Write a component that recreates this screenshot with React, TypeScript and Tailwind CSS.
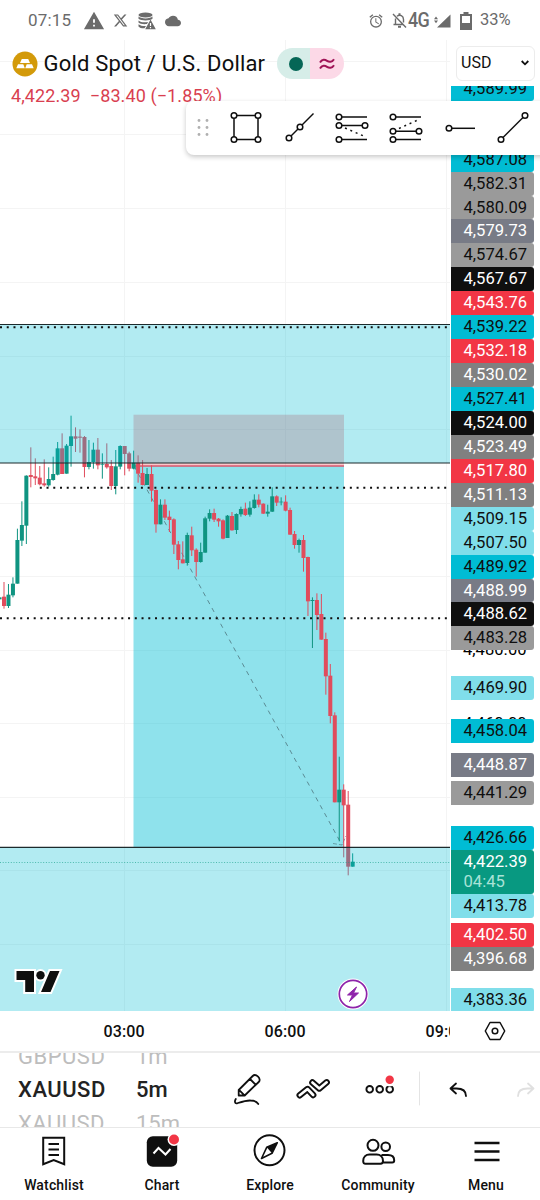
import { FaXTwitter } from "react-icons/fa6";
import { MdWarning, MdCloud, MdOutlineAlarm } from "react-icons/md";

type Candle = [string, number, number, number, number];

// colour, high, body top, body bottom, low (thirds of a pixel below y = 400)
const candles: Candle[] = [
  ["g", 592, 592, 598, 598],
  ["r", 546, 590, 618, 626],
  ["g", 552, 584, 618, 624],
  ["g", 532, 551, 586, 592],
  ["g", 386, 420, 551, 551],
  ["g", 304, 375, 422, 438],
  ["g", 226, 227, 377, 432],
  ["r", 142, 225, 231, 262],
  ["r", 175, 229, 235, 255],
  ["r", 198, 233, 253, 256],
  ["r", 178, 250, 256, 260],
  ["g", 202, 237, 256, 260],
  ["g", 170, 222, 240, 242],
  ["g", 126, 145, 224, 226],
  ["r", 100, 145, 222, 222],
  ["g", 132, 137, 221, 221],
  ["g", 47, 109, 138, 200],
  ["r", 82, 109, 116, 156],
  ["r", 88, 110, 113, 158],
  ["r", 108, 111, 201, 232],
  ["g", 120, 186, 201, 208],
  ["g", 128, 149, 186, 206],
  ["r", 114, 149, 196, 208],
  ["g", 160, 192, 194, 236],
  ["r", 130, 192, 202, 206],
  ["r", 180, 198, 258, 270],
  ["g", 150, 199, 258, 283],
  ["g", 136, 138, 200, 208],
  ["r", 138, 138, 162, 226],
  ["r", 155, 160, 206, 214],
  ["g", 152, 188, 206, 208],
  ["r", 166, 188, 221, 248],
  ["r", 180, 219, 255, 256],
  ["g", 204, 222, 255, 255],
  ["r", 196, 222, 272, 305],
  ["r", 268, 270, 373, 398],
  ["g", 298, 314, 373, 373],
  ["r", 298, 314, 353, 360],
  ["r", 332, 350, 360, 396],
  ["r", 355, 358, 434, 462],
  ["r", 423, 433, 480, 508],
  ["r", 424, 478, 490, 490],
  ["g", 398, 405, 489, 497],
  ["r", 380, 406, 451, 468],
  ["r", 445, 449, 486, 530],
  ["g", 428, 456, 486, 488],
  ["g", 350, 355, 458, 458],
  ["g", 328, 339, 356, 364],
  ["r", 326, 339, 359, 366],
  ["r", 354, 356, 364, 380],
  ["r", 358, 361, 416, 418],
  ["g", 345, 347, 414, 414],
  ["r", 336, 348, 391, 392],
  ["g", 340, 342, 390, 402],
  ["g", 320, 327, 343, 350],
  ["r", 308, 326, 345, 348],
  ["g", 304, 323, 344, 350],
  ["g", 283, 299, 324, 326],
  ["r", 283, 299, 314, 322],
  ["r", 310, 311, 341, 342],
  ["g", 314, 335, 341, 350],
  ["g", 262, 289, 335, 336],
  ["r", 286, 289, 308, 318],
  ["g", 292, 305, 307, 316],
  ["r", 286, 305, 332, 334],
  ["r", 323, 330, 404, 404],
  ["r", 393, 402, 435, 446],
  ["g", 416, 420, 435, 458],
  ["r", 405, 420, 474, 515],
  ["r", 470, 471, 604, 648],
  ["g", 592, 600, 603, 744],
  ["r", 580, 600, 645, 690],
  ["r", 582, 642, 719, 719],
  ["r", 698, 717, 829, 884],
  ["r", 792, 827, 948, 970],
  ["r", 937, 946, 1207, 1207],
  ["g", 1070, 1169, 1207, 1324],
  ["r", 1153, 1169, 1216, 1372],
  ["r", 1173, 1214, 1400, 1426],
  ["g", 1360, 1385, 1400, 1400],
];

const CYAN = "bg-[#00bcd4] text-[#0f0f0f]";
const LIGHT = "bg-[#80deea] text-[#0f0f0f]";
const GRAY = "bg-[#9a9a9a] text-[#0f0f0f]";
const DARK = "bg-[#808080] text-white";
const SLATE = "bg-[#787b86] text-white";
const BLACK = "bg-[#0f0f0f] text-white";
const RED = "bg-[#f23645] text-white";

// price, colours, gap above
const prices = [
  ["4,589.99", CYAN, "-mt-[9px]"],
  ["4,587.08", CYAN, "mt-[46.700px]"],
  ["4,582.31", GRAY, ""],
  ["4,580.09", GRAY, ""],
  ["4,579.73", SLATE, ""],
  ["4,574.67", GRAY, ""],
  ["4,567.67", BLACK, ""],
  ["4,543.76", RED, ""],
  ["4,539.22", CYAN, ""],
  ["4,532.18", RED, ""],
  ["4,530.02", DARK, ""],
  ["4,527.41", CYAN, ""],
  ["4,524.00", BLACK, ""],
  ["4,523.49", DARK, ""],
  ["4,517.80", RED, ""],
  ["4,511.13", DARK, ""],
  ["4,509.15", LIGHT, ""],
  ["4,507.50", LIGHT, ""],
  ["4,489.92", CYAN, ""],
  ["4,488.99", SLATE, ""],
  ["4,488.62", BLACK, ""],
  ["4,483.28", GRAY, ""],
  ["4,469.90", LIGHT, "mt-[25.500px]"],
  ["4,458.04", CYAN, "mt-[19.500px]"],
  ["4,448.87", SLATE, "mt-[9.500px]"],
  ["4,441.29", GRAY, "mt-[4px]"],
  ["4,426.66", CYAN, "mt-[21.500px]"],
  ["4,422.39", "bg-[#089981] text-white", ""],
  ["4,413.78", LIGHT, ""],
  ["4,402.50", RED, "mt-[5.500px]"],
  ["4,396.68", DARK, ""],
  ["4,383.36", LIGHT, "mt-[17px]"],
];

const StatusBar = () => (
  <div className="h-10 shrink-0 flex items-center justify-between pt-px pl-7 pr-7 text-[#6b6b6b]">
    <div className="flex items-center">
      <span className="text-[17px] w-[43px] tracking-[0.2px]">07:15</span>
      <MdWarning className="ml-[12px] w-[22px] h-[22px]" />
      <FaXTwitter className="ml-[8px] w-[15px] h-[15px]" />
      <svg className="ml-[10px] w-[18px] h-[18px]" viewBox="0 0 18 18" fill="currentColor">
        <ellipse cx="7.500" cy="3" rx="7" ry="2.600" />
        <path d="M.5 4.600c2 2.400 12 2.400 14 0v2.200C12 9 3 9 .5 6.800z" />
        <path d="M.5 8.400c2 2 6 2 9.500 1.500l-1 2.200C5 12.400 2 12 .5 10.600z" />
        <path d="M.5 12.200c2 1.700 5 1.800 7.500 1.700l-1.500 2.400C4 16.400 1.500 16 .5 14.500z" />
        <path d="M12.500 7.500 17.800 17.300H7.200zM11.900 11v3h1.200v-3zm0 4v1.200h1.200V15z" fillRule="evenodd" />
      </svg>
      <MdCloud className="ml-[9px] w-[16px] h-[16px]" />
    </div>
    <div className="flex items-center">
      <MdOutlineAlarm className="w-[16px] h-[16px]" />
      <svg className="ml-[8px] w-[15px] h-[17px]" viewBox="0 0 15 17" fill="none" stroke="currentColor" strokeWidth="1.400">
        <path d="M1 2 14 15.500M5 4.200C8 2 11.500 4 11.500 7.500v3M3.500 6.500v6H1.500h9.500" />
        <path d="M6 14.800h3M7.500 1.300v2" strokeWidth="2" />
      </svg>
      <span className="text-[19.500px] font-medium tracking-[-0.600px] scale-x-[.92]">4G</span>
      <svg className="ml-[4px] w-[17px] h-[14px]" viewBox="0 0 17 14" fill="currentColor">
        <path d="M16.500.5v13H3zM0 5.200l2-2.700 2 2.700zM0 6.600h4L2 9.300z" />
      </svg>
      <svg className="ml-[9px] w-[12px] h-[18px]" viewBox="0 0 12 18">
        <path d="M3.500 0h5v2H12v16H0V2h3.500z" fill="currentColor" />
        <path d="M2 4h8v7H2z" fill="#fff" />
      </svg>
      <span className="ml-[8px] text-[16.500px] w-[32px]">33%</span>
    </div>
  </div>
);

const DottedLine = ({ y, from }: { y: number; from: number }) => (
  <line x1={from} x2="449" y1={y} y2={y} stroke="#0f0f0f" strokeWidth="2" strokeDasharray="2 4.740" />
);

const Chart = () => (
  <svg className="block w-[450px] h-[971px]" viewBox="0 40 450 971">
    <g stroke="#f4f4f4" strokeWidth="1">
      {[61.5, 134.5, 208.5, 282.5, 356.5, 429.5, 503.5, 576.5, 650.5, 723.5, 797.5, 870.5, 944.5].map((y) => (
        <line key={y} x1="0" x2="450" y1={y} y2={y} />
      ))}
      {[124.5, 285.5, 446.5].map((x) => (
        <line key={x} x1={x} x2={x} y1="40" y2="1011" />
      ))}
    </g>
    {/* short position */}
    <rect x="133.500" y="414.700" width="210.500" height="51" fill="#f23645" fillOpacity=".28" />
    <rect x="133.500" y="466" width="210.500" height="381" fill="#00bcd4" fillOpacity=".44" />
    <line x1="134" x2="344" y1="466" y2="466" stroke="#d9536a" strokeWidth="1.300" />
    <path d="M134 466 342 845" stroke="#5b8b94" strokeWidth="1" strokeDasharray="4.500 4.500" fill="none" />
    <path d="M333 843.500l9 1.500 4-9" stroke="#5b8b94" strokeWidth=".8" strokeDasharray="4 2" fill="none" />
    {candles.map(([color, high, top, bottom, low], i) => {
      const x = 4 + (i - 1) * 4.47;
      const fill = color === "g" ? "#0f9481" : "#e04c5d";
      return (
        <g key={i} fill={fill}>
          <rect x={x - 0.5} y={400 + high / 3} width="1" height={(low - high) / 3} />
          <rect x={x - 2} y={400 + top / 3} width="4" height={(bottom - top) / 3} />
        </g>
      );
    })}
    <rect x="0" y="324" width="450" height="139" fill="#00bcd4" fillOpacity=".3" />
    <rect x="0" y="847" width="450" height="164" fill="#00bcd4" fillOpacity=".3" />
    <g stroke="#1d2a2c" strokeWidth="1.200">
      <line x1="0" x2="450" y1="324.500" y2="324.500" />
      <line x1="0" x2="450" y1="463" y2="463" />
      <line x1="0" x2="450" y1="847.300" y2="847.300" />
    </g>
    <DottedLine y={327.300} from={0} />
    <DottedLine y={487.800} from={39.800} />
    <DottedLine y={618.300} from={0} />
    <line x1="0" x2="450" y1="862.500" y2="862.500" stroke="#089981" strokeOpacity=".6" strokeDasharray="1 1.700" />
  </svg>
);

const ChartHeader = () => (
  <div className="absolute top-0 left-0 pl-3 pt-2">
    <div className="flex items-center h-[31px]">
      <svg className="w-[26px] h-[26px]" viewBox="0 0 26 26">
        <circle cx="13" cy="13" r="12.500" fill="#d39a0a" />
        <path d="M9.800 8h6.400l1.800 4H8zM6 13.200h5.300l1.500 4H4.300zM14.700 13.200H20l1.700 4h-8.500z" fill="#fff" />
      </svg>
      <h1 className="ml-[5.500px] w-[233.500px] text-[22px] tracking-[0.190px] leading-none text-[#0f0f0f] whitespace-nowrap">Gold Spot / U.S. Dollar</h1>
      <div className="flex w-[67px] h-[31px] rounded-full overflow-hidden">
        <div className="w-[33px] bg-[#d6ede8] flex items-center justify-center pl-1">
          <div className="w-[14px] h-[14px] rounded-full bg-[#056656]" />
        </div>
        <div className="w-[34px] bg-[#fcd9e7] flex items-center justify-center">
          <svg className="w-4 h-3" viewBox="0 0 16 12" fill="none" stroke="#a01356" strokeWidth="2">
            <path d="M1 4.500C3 1 6 1.500 8 2.800S13 4.500 15 1.200M1 10.500C3 7 6 7.500 8 8.800S13 10.500 15 7.200" />
          </svg>
        </div>
      </div>
    </div>
    <div className="-ml-px mt-[7px] flex gap-[9px] text-[18px] tracking-[0.100px] leading-[20px] text-[#d93f50] whitespace-nowrap">
      <span>4,422.39</span>
      <span>−83.40 (−1.85%)</span>
    </div>
  </div>
);

const Handle = ({ x, y }: { x: number; y: number }) => (
  <circle cx={x} cy={y} r="2.800" fill="#fff" />
);

const DrawingBar = () => (
  <div className="absolute left-[186px] top-[61px] w-[360px] h-[53.500px] rounded-l-lg bg-white shadow-[0_2px_5px_rgba(0,0,0,0.22)] flex items-start">
    <svg className="w-[354px] h-[53px]" viewBox="186 101 354 53" fill="none" stroke="#0f0f0f" strokeWidth="1.500">
      <g fill="#b0b0b0" stroke="none">
        {[120.500, 127.500, 134.500].map((y) => (
          <g key={y}>
            <circle cx="199" cy={y} r="1.400" />
            <circle cx="207" cy={y} r="1.400" />
          </g>
        ))}
      </g>
      <path d="M234 115.500h24v24h-24z" />
      <Handle x={234} y={115.500} />
      <Handle x={258} y={115.500} />
      <Handle x={234} y={139.500} />
      <Handle x={258} y={139.500} />
      <path d="M289 138 313.500 113.500" />
      <Handle x={289} y={138} />
      <Handle x={300} y={127} />
      <path d="M339 117h28M339 125.500h26M339 139.500h28" />
      <path d="M345 128 366 137" strokeDasharray="2 3.800" />
      <Handle x={339} y={117} />
      <Handle x={339} y={125.500} />
      <Handle x={365} y={125.500} />
      <Handle x={339} y={139.500} />
      <path d="M393 117h28M393 131.300h26M393 139.500h28" />
      <path d="M399 128.500 420 119" strokeDasharray="2 3.800" />
      <Handle x={393} y={117} />
      <Handle x={393} y={131.300} />
      <Handle x={419} y={131.300} />
      <Handle x={393} y={139.500} />
      <path d="M449 128.300h26" />
      <Handle x={449} y={128.300} />
      <path d="M501 139.500 525 115.500" />
      <Handle x={501} y={139.500} />
      <Handle x={525} y={115.500} />
    </svg>
  </div>
);

const PriceScale = () => (
  <div className="w-[90px] flex flex-col pl-px">
    <div className="h-[46px] shrink-0 flex items-start pt-[5.500px] pl-[5px]">
      <div className="w-[79px] h-[35px] rounded-md border border-[#ececec] flex items-center justify-between pl-1 pr-[5px]">
        <span className="text-[16px] text-[#0f0f0f]">USD</span>
        <svg className="w-[8px] h-[6px]" viewBox="0 0 8 6" fill="none" stroke="#0f0f0f" strokeWidth="1.800">
          <path d="M.7 1 4 4.300 7.300 1" />
        </svg>
      </div>
    </div>
    <div className="flex-1 overflow-hidden text-[16.600px] leading-[23px] relative">
      <span className="absolute left-[12px] top-[552px]">4,480.00</span>
      <span className="absolute left-[12px] top-[626px]">4,460.00</span>
      {prices.map(([price, colors, gap]) => (
        <div key={price} className={`relative w-[83px] pl-[12.500px] rounded-r-[3px] ${price === "4,422.39" ? "h-[43.700px]" : "h-[23.940px]"} ${colors} ${gap}`}>
          {price}
          {price === "4,422.39" && <div className="-mt-[3px] text-[#a8e3d7]">04:45</div>}
        </div>
      ))}
    </div>
  </div>
);

const TimeAxis = () => (
  <div className="h-10 shrink-0 flex items-center pt-px text-[16px] font-medium text-[#0f0f0f]">
    <div className="w-[450px] flex overflow-hidden whitespace-nowrap pl-[103.500px] tracking-[0.100px]">
      <span className="w-[161px] shrink-0">03:00</span>
      <span className="w-[161px] shrink-0">06:00</span>
      <span className="shrink-0">09:00</span>
    </div>
    <svg className="-mt-px ml-[34px] w-[22px] h-[20px]" viewBox="0 0 22 20" fill="none" stroke="#0f0f0f" strokeWidth="1.500">
      <path d="M6 1.500h10L20.700 10 16 18.500H6L1.300 10z" strokeLinejoin="round" />
      <circle cx="11" cy="10" r="2.800" />
    </svg>
  </div>
);

const Toolbar = () => (
  <div className="h-[76.500px] shrink-0 border-t-2 border-b border-[#ececec] border-b-[#e8e8e8] flex overflow-hidden">
    <div className="w-[118px] pl-[18px] text-[22px] leading-[33.500px] -mt-[13.500px] text-[#0f0f0f] whitespace-nowrap tracking-[0.500px]">
      <div className="text-[#bdbdbd]">GBPUSD</div>
      <div className="font-medium text-[#222]">XAUUSD</div>
      <div className="text-[#bdbdbd]">XAUUSD</div>
    </div>
    <div className="w-[99px] pl-[18px] text-[22px] leading-[33.500px] -mt-[13.500px] text-[#0f0f0f]">
      <div className="text-[#bdbdbd]">1m</div>
      <div className="font-medium text-[#222]">5m</div>
      <div className="text-[#bdbdbd]">15m</div>
    </div>
    <svg className="w-[323px] h-[73px]" viewBox="217 1053 323 73" fill="none" stroke="#0f0f0f" strokeWidth="1.800" strokeLinejoin="round" strokeLinecap="round">
      <path d="M238.700 1095.500v-5.500l14-14c3-3 9.300 2.800 6 6l-14 13.500zM239 1089.800l5.500 5.500M250 1079l5.500 5.500" />
      <path d="M235.800 1099c-1.300 2-1.200 4.700 1.200 4.300 5-1.600 9-3 13.500-2.800 4 0 6.500 1.500 7.800 3.500" />
      <g strokeLinecap="round">
        <path d="M299.700 1095.300l7.800-6.300 5.700 6M312.400 1082.500l6.900 6 7.400-6.200" strokeWidth="6.400" />
        <path d="M299.700 1095.300l7.800-6.300 5.700 6M312.400 1082.500l6.900 6 7.400-6.200" stroke="#fff" strokeWidth="2.600" />
      </g>
      <g strokeWidth="1.900">
        <circle cx="369.700" cy="1089.300" r="3.300" />
        <circle cx="379.700" cy="1089.300" r="3.300" />
        <circle cx="389.700" cy="1089.300" r="3.300" />
      </g>
      <circle cx="389.700" cy="1080" r="6.500" fill="#fff" stroke="none" />
      <circle cx="389.700" cy="1079.700" r="4.200" fill="#f23645" stroke="none" />
      <path d="M419.500 1072v33" stroke="#e4e4e4" strokeWidth="1" />
      <path d="M456 1083.500l-5.500 5 5.500 5M450.500 1088.500h6c6 0 9.500 2.500 9.500 7.500" />
      <path d="M528 1083.500l5.500 5-5.500 5M533.500 1088.500h-6c-6 0-9.500 2.500-9.500 7.500" stroke="#e0e0e0" />
    </svg>
  </div>
);

const navItems = [
  {
    label: "Watchlist",
    icon: <path d="M5.200 2.800h21v26.500l-10.500-4.300-10.500 4.300zM10.500 9h10.500M10.500 14.500h10.500M10.500 20h10.500" />,
  },
  {
    label: "Chart",
    icon: (
      <>
        <rect x=".8" y="1.200" width="30.400" height="30.500" rx="6" fill="#0f0f0f" stroke="none" />
        <path d="M7.500 18.500l5-5.500 7 6.500 5-5.500" stroke="#fff" />
        <circle cx="28" cy="4.500" r="6.500" fill="#fff" stroke="none" />
        <circle cx="28" cy="4.500" r="5" fill="#f23645" stroke="none" />
      </>
    ),
  },
  {
    label: "Explore",
    icon: (
      <>
        <circle cx="15.500" cy="15.300" r="15" />
        <path d="M23.300 7.700 12.700 12.300 7.500 23.500 18 18.300z" strokeWidth="1.600" strokeLinejoin="round" />
        <path d="M23.300 7.700 12.700 12.300 18 18.300z" fill="#0f0f0f" stroke="none" />
      </>
    ),
  },
  {
    label: "Community",
    icon: (
      <>
        <circle cx="11" cy="10.300" r="5.500" />
        <circle cx="23.700" cy="11.800" r="4.300" />
        <path d="M1.200 26c0-4 2.800-6.500 6.300-6.500h7.200c3.500 0 6.300 2.500 6.300 6.500 0 1.800-.7 2.700-2.500 2.700H3.500c-1.600 0-2.300-.9-2.300-2.700zM19.500 20h6.500c3.800 0 6.200 2 6.200 5.300 0 1.500-.7 2.200-2 2.200h-9.500" />
      </>
    ),
  },
  { label: "Menu", icon: <path d="M4.500 8h25M4.500 16.500h25M4.500 25h25" strokeWidth="2.700" /> },
];

const BottomNav = () => (
  <div className="flex-1 flex">
    {navItems.map(({ label, icon }) => (
      <div key={label} className="w-[108px] flex flex-col items-center pt-[7.500px]">
        <svg className="w-8 h-8 overflow-visible" viewBox="0 0 32 32" fill="none" stroke="#0f0f0f" strokeWidth="2">
          {icon}
        </svg>
        <span className="mt-[7.500px] text-[14px] tracking-[0.150px] leading-[20px] font-medium text-[#0f0f0f]">{label}</span>
      </div>
    ))}
  </div>
);

export default function App() {
  return (
    <div className="w-[540px] h-[1200px] flex flex-col bg-white overflow-hidden font-['Roboto',sans-serif]">
      <StatusBar />
      <div className="relative h-[971px] shrink-0 flex">
        <Chart />
        <PriceScale />
        <ChartHeader />
        <DrawingBar />
        <svg className="absolute left-[14px] bottom-[16px] w-[50px] h-[29px]" viewBox="14 966 50 29" fill="#0f0f0f" stroke="#fff" strokeWidth="4" paintOrder="stroke">
          <path d="M16.500 971h17.500v21h-8.800v-12h-8.700zM50 971h9.500l-9 21h-9.500z" />
          <circle cx="40.500" cy="975.300" r="4.200" />
        </svg>
        <svg className="absolute left-[337px] bottom-[1px] w-8 h-8" viewBox="0 0 32 32">
          <circle cx="16" cy="16" r="15.500" fill="#fff" />
          <circle cx="16" cy="16" r="13.700" fill="#fff" stroke="#8e24aa" strokeWidth="1.700" />
          <path d="M19.500 9 10.500 17h5l-3 6.500 9-8.500h-5z" fill="#8e24aa" stroke="#8e24aa" strokeLinejoin="round" />
        </svg>
      </div>
      <TimeAxis />
      <Toolbar />
      <BottomNav />
    </div>
  );
}
